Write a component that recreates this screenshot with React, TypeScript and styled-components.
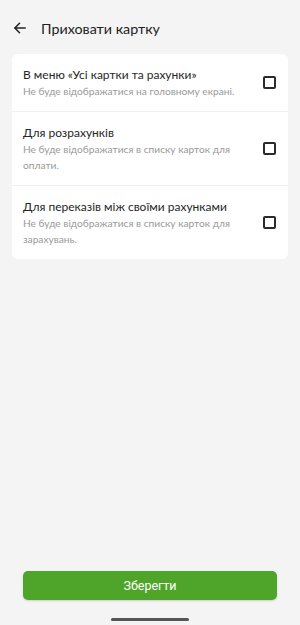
import styled, { createGlobalStyle } from 'styled-components'

const GlobalStyle = createGlobalStyle`
  html, body {
    margin: 0;
    padding: 0;
    background: #f4f4f4;
  }
  #root {
    height: 625px;
  }
`

const Screen = styled.div`
  height: 625px;
  display: flex;
  flex-direction: column;
  font-family: Lato, "Noto Sans", sans-serif;
  background: #f4f4f4;
`

const Header = styled.div`
  height: 54px;
  box-sizing: border-box;
  padding: 2px 0 0 14px;
  display: flex;
  align-items: center;
  gap: 15px;
`

const BackBtn = styled.button`
  border: 0;
  background: none;
  padding: 0;
  width: 12px;
  height: 12px;
  display: flex;
  cursor: pointer;
`

const Title = styled.h1`
  margin: 0;
  font-size: 14.3px;
  font-weight: 400;
  color: #222;
`

const Card = styled.div`
  margin: 0 12px;
  background: #fff;
  border-radius: 6px;
  overflow: hidden;
`

const Row = styled.label`
  display: flex;
  align-items: center;
  padding: 12px 11px 12px 11px;
  border-bottom: 1px solid #f1f1f1;
  cursor: pointer;
  &:last-child {
    border-bottom: 0;
  }
`

const RowText = styled.div`
  flex: 1;
  padding-right: 18px;
`

const RowTitle = styled.div`
  font-size: 12px;
  line-height: 17px;
  color: #262626;
`

const RowSub = styled.div`
  font-size: 10.2px;
  line-height: 16px;
  color: #999;
`

const Check = styled.span`
  width: 13px;
  height: 13px;
  box-sizing: border-box;
  border: 2px solid #2b2b2b;
  border-radius: 2px;
  flex-shrink: 0;
  margin-right: 1px;
`

const Spacer = styled.div`
  flex: 1;
`

const SaveBtn = styled.button`
  margin: 0 23px;
  height: 29px;
  border: 0;
  border-radius: 5px;
  background: #4fa52a;
  color: #fff;
  font-family: Roboto, sans-serif;
  font-size: 12.5px;
  font-weight: 400;
  box-shadow: 0 1px 2px rgba(0, 0, 0, 0.15);
  cursor: pointer;
`

const HomeBar = styled.div`
  height: 25px;
  display: flex;
  align-items: flex-end;
  justify-content: center;
  padding-bottom: 4px;
  box-sizing: border-box;
  &::after {
    content: '';
    width: 78px;
    height: 3px;
    border-radius: 2px;
    background: #555;
  }
`

const items = [
  { title: 'В меню «Усі картки та рахунки»', sub: 'Не буде відображатися на головному екрані.' },
  { title: 'Для розрахунків', sub: 'Не буде відображатися в списку карток для оплати.' },
  { title: 'Для переказів між своїми рахунками', sub: 'Не буде відображатися в списку карток для зарахувань.' },
]

export default function App() {
  return (
    <>
      <GlobalStyle />
      <Screen>
        <Header>
          <BackBtn>
            <svg width="12" height="12" viewBox="0 0 12 12" fill="none" stroke="#222" strokeWidth="1.5" strokeLinecap="round" strokeLinejoin="round">
              <path d="M11.2 6H1" />
              <path d="M5.5 1.2L0.9 6l4.6 4.8" />
            </svg>
          </BackBtn>
          <Title>Приховати картку</Title>
        </Header>
        <Card>
          {items.map((it) => (
            <Row key={it.title}>
              <RowText>
                <RowTitle>{it.title}</RowTitle>
                <RowSub>{it.sub}</RowSub>
              </RowText>
              <Check />
            </Row>
          ))}
        </Card>
        <Spacer />
        <SaveBtn>Зберегти</SaveBtn>
        <HomeBar />
      </Screen>
    </>
  )
}
